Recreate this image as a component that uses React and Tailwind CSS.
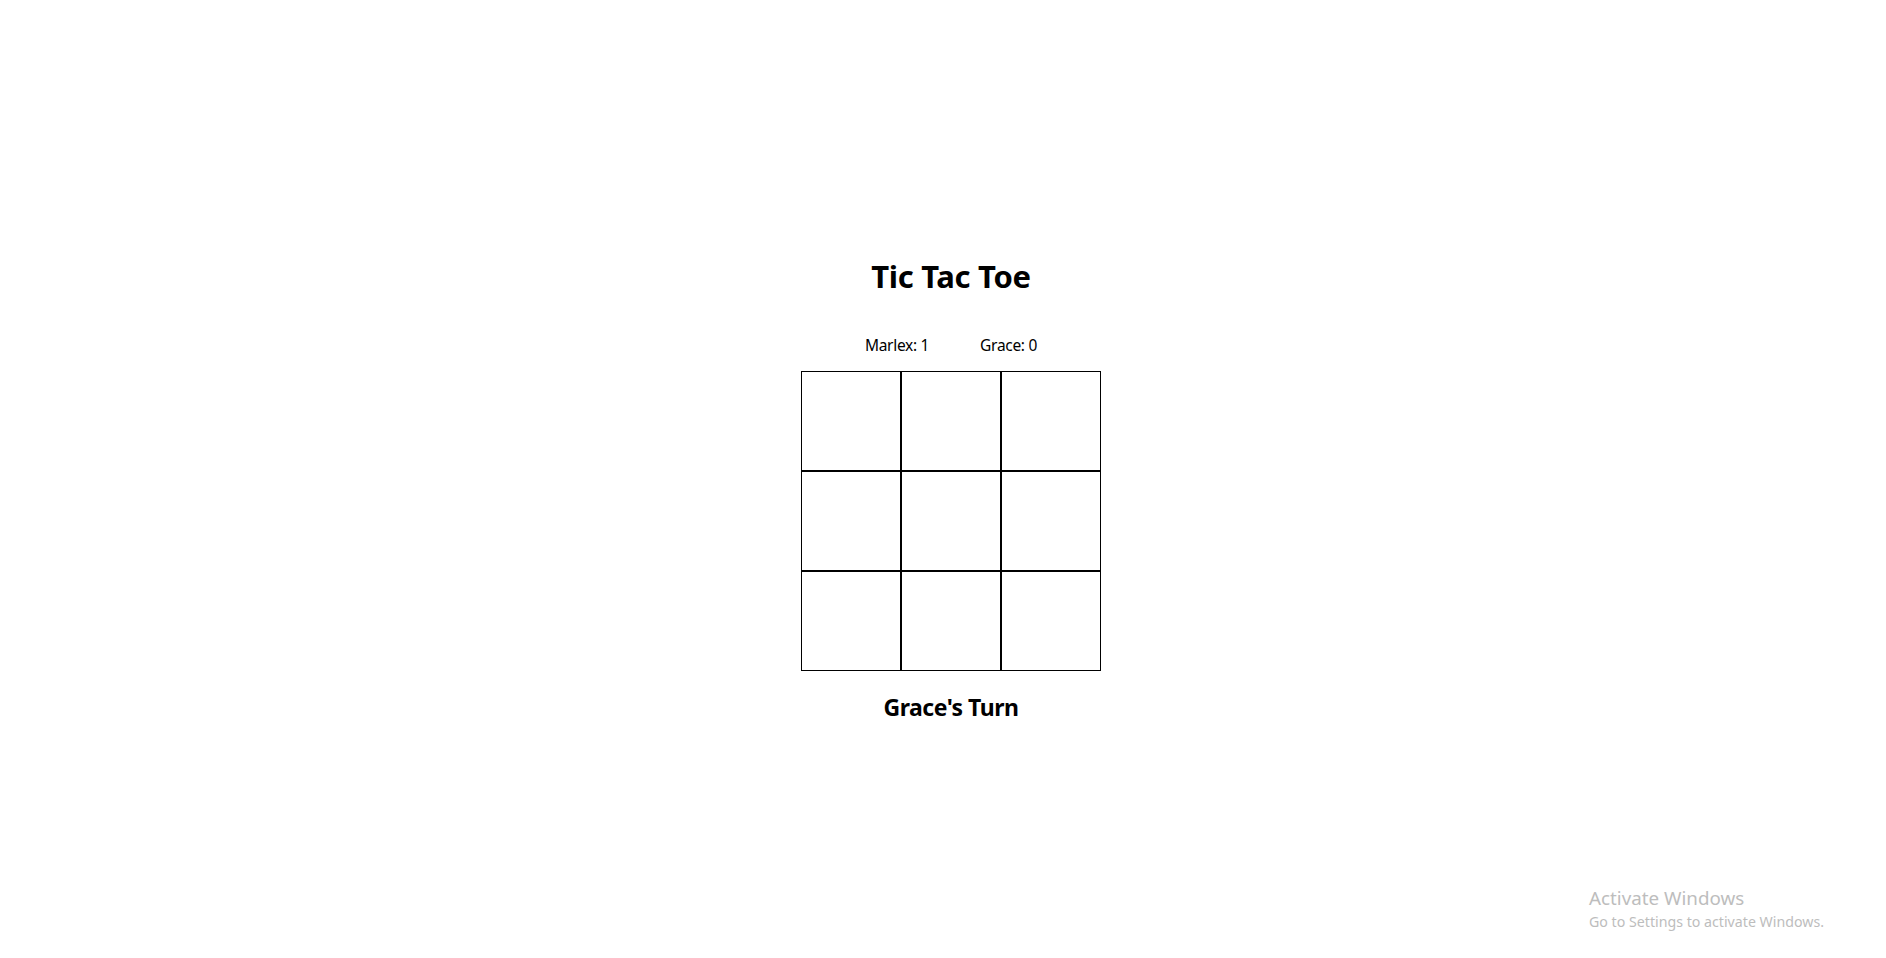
export default function App() {
  const cells = Array.from({ length: 9 });
  return (
    <div className="relative w-[1886px] h-[958px] bg-white text-black" style={{ fontFamily: '"Noto Sans", "Open Sans", sans-serif' }}>
      <div className="flex flex-col items-center pt-[256px] pl-[16px]">
        <h1 className="text-[31px] leading-[40px] font-bold tracking-[-0.3px]">Tic Tac Toe</h1>
        <div className="mt-[39px] flex gap-[51px] text-[15.5px] leading-[20px] tracking-[-0.3px]">
          <span>Marlex: 1</span>
          <span>Grace: 0</span>
        </div>
        <div className="mt-[16px] grid grid-cols-[repeat(3,100px)] grid-rows-[repeat(3,100px)]">
          {cells.map((_, i) => (
            <div key={i} className="box-border w-[100px] h-[100px] border border-black bg-white" />
          ))}
        </div>
        <h2 className="mt-[20px] text-[23px] leading-[32px] font-bold tracking-[-0.5px]">Grace's Turn</h2>
      </div>
      <div className="absolute left-[1589px] top-[886px] text-[#bdbdbd]" style={{ fontFamily: '"Noto Sans", sans-serif' }}>
        <div className="text-[18.8px] leading-[25px]">Activate Windows</div>
        <div className="text-[14.2px] leading-[21px]">Go to Settings to activate Windows.</div>
      </div>
    </div>
  );
}
